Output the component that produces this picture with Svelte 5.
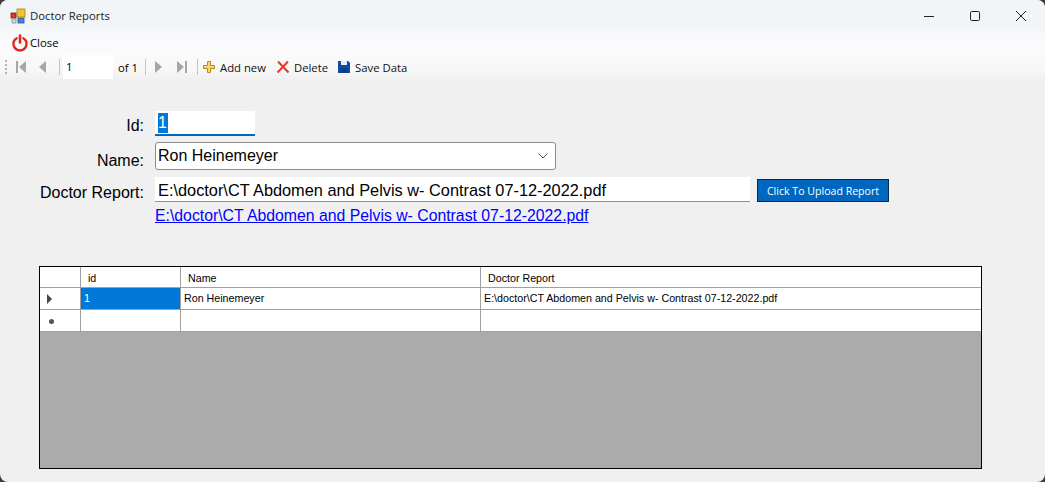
<script lang="ts">
  const columns = ['id', 'Name', 'Doctor Report'];
  const path = 'E:\\doctor\\CT Abdomen and Pelvis w- Contrast 07-12-2022.pdf';
</script>

<div class="window">
  <header class="titlebar">
    <svg class="app-icon" width="16" height="16" viewBox="0 0 16 16" aria-hidden="true">
      <rect x="7" y="1" width="8" height="8" fill="#f4c430" stroke="#a8801c" stroke-width="0.8"/>
      <rect x="1" y="5" width="5" height="5" fill="#d83a2e" stroke="#7f2018" stroke-width="0.8"/>
      <rect x="8" y="10" width="6" height="5" fill="#4a80d8" stroke="#2a4f90" stroke-width="0.8"/>
      <rect x="2" y="11" width="4" height="4" fill="#d5d8de" stroke="#8d9097" stroke-width="0.8"/>
    </svg>
    <span class="title">Doctor Reports</span>
    <div class="win-buttons">
      <svg width="10" height="10" viewBox="0 0 10 10" aria-hidden="true"><path d="M0 5.5h10" stroke="#222" fill="none"/></svg>
      <svg width="10" height="10" viewBox="0 0 10 10" aria-hidden="true"><rect x="0.5" y="0.5" width="9" height="9" rx="1.2" stroke="#222" fill="none"/></svg>
      <svg width="10" height="10" viewBox="0 0 10 10" aria-hidden="true"><path d="M0 0l10 10M10 0L0 10" stroke="#222" fill="none"/></svg>
    </div>
  </header>

  <div class="menubar">
    <svg width="18" height="18" viewBox="0 0 18 18" aria-hidden="true">
      <path d="M5.6 4.2a6.6 6.6 0 1 0 6.8 0" fill="none" stroke="#e0281f" stroke-width="2.4" stroke-linecap="round"/>
      <path d="M9 1.5v7" stroke="#e0281f" stroke-width="2.6" stroke-linecap="round"/>
    </svg>
    <span>Close</span>
  </div>

  <div class="toolbar">
    <span class="grip"></span>
    <svg class="nav" width="12" height="14" viewBox="0 0 12 14" aria-hidden="true"><path d="M1 1h2v12H1zM11 1v12L4 7z"/></svg>
    <svg class="nav" width="12" height="14" viewBox="0 0 12 14" aria-hidden="true"><path d="M9 1v12L2 7z"/></svg>
    <span class="sep"></span>
    <span class="position">1</span>
    <span class="of">of 1</span>
    <span class="sep"></span>
    <svg class="nav nav-next" width="12" height="14" viewBox="0 0 12 14" aria-hidden="true"><path d="M3 1v12l7-6z"/></svg>
    <svg class="nav nav-last" width="12" height="14" viewBox="0 0 12 14" aria-hidden="true"><path d="M1 1v12l7-6zM9 1h2v12H9z"/></svg>
    <span class="sep"></span>
    <button class="tool">
      <svg width="14" height="14" viewBox="0 0 14 14" aria-hidden="true"><path d="M5.5 1.5h3v4h4v3h-4v4h-3v-4h-4v-3h4z" fill="#f7d774" stroke="#b98a1e"/></svg>
      Add new
    </button>
    <button class="tool">
      <svg width="14" height="14" viewBox="0 0 14 14" aria-hidden="true"><path d="M2 1.5l10.5 11M12 1.5L1.5 12.5" stroke="#e33a2a" stroke-width="2" fill="none"/></svg>
      Delete
    </button>
    <button class="tool">
      <svg width="14" height="14" viewBox="0 0 14 14" aria-hidden="true"><path d="M1 1h10l2 2v10H1z" fill="#0b4ea2"/><path d="M4 1h6v4H4z" fill="#e8eef8"/><path d="M3.5 8h7v5h-7z" fill="#0b3f86"/></svg>
      Save Data
    </button>
  </div>

  <form class="form">
    <label class="field-label label-id" for="rec-id">Id:</label>
    <div class="id-box" id="rec-id"><span class="selected">1</span></div>

    <label class="field-label label-name" for="rec-name">Name:</label>
    <div class="combo" id="rec-name">
      <span>Ron Heinemeyer</span>
      <svg width="10" height="6" viewBox="0 0 10 6" aria-hidden="true"><path d="M0.5 0.5L5 5l4.5-4.5" fill="none" stroke="#555"/></svg>
    </div>

    <label class="field-label label-report" for="rec-report">Doctor Report:</label>
    <div class="report-row">
      <div class="report-box" id="rec-report">{path}</div>
      <button type="button" class="upload">Click To Upload Report</button>
    </div>

    <a class="link" href="#top">{path}</a>
  </form>

  <div class="grid">
    <div class="row header">
      <div class="cell head"></div>
      {#each columns as col}
        <div class="cell">{col}</div>
      {/each}
    </div>
    <div class="row current">
      <div class="cell head"><i class="arrow"></i></div>
      <div class="cell picked">1</div>
      <div class="cell">Ron Heinemeyer</div>
      <div class="cell">{path}</div>
    </div>
    <div class="row fresh">
      <div class="cell head"><i class="star"></i></div>
      <div class="cell"></div>
      <div class="cell"></div>
      <div class="cell"></div>
    </div>
  </div>
</div>

<style>
  :global(body) {
    margin: 0;
    background: #3a3f3a;
    overflow: hidden;
  }

  .window {
    width: 1045px;
    height: 482px;
    box-sizing: border-box;
    background: #f0f0f0;
    border-radius: 8px;
    overflow: hidden;
    color: #000;
    font-family: "Liberation Sans", Arial, sans-serif;
  }

  .titlebar {
    height: 31px;
    background: #f1f5f8;
    display: flex;
    align-items: center;
    padding-left: 10px;
    font: 11.3px "Open Sans", "Noto Sans", sans-serif;
    color: #1a1a1a;
  }

  .title { margin-left: 4px; }

  .win-buttons {
    margin-left: auto;
    display: flex;
    gap: 36px;
    padding-right: 19px;
  }

  .menubar {
    height: 24px;
    background: linear-gradient(#f7f8fa, #fbfbfc);
    display: flex;
    align-items: center;
    gap: 1px;
    padding-left: 11px;
    font: 11.3px "Open Sans", "Noto Sans", sans-serif;
  }

  .menubar span { margin-bottom: 2px; }

  .toolbar {
    height: 24px;
    padding: 0 0 1px 5px;
    background: linear-gradient(#fafafb, #f7f7f8 60%, #f0f0f0);
    display: flex;
    align-items: center;
    font: 11.3px "Open Sans", "Noto Sans", sans-serif;
  }

  .grip {
    width: 2px;
    height: 14px;
    margin-right: 8px;
    background: repeating-linear-gradient(#b5b5b5 0 2px, transparent 2px 4px);
  }

  .nav { fill: #a6a6a6; margin-right: 10px; }
  .nav-next { margin: 0 12px 0 3px; }
  .nav-last { margin-right: 9px; }

  .sep {
    width: 1px;
    height: 16px;
    background: #c4c4c4;
    margin: 0 3px 0 0;
  }

  .position {
    width: 50px;
    height: 24px;
    line-height: 24px;
    background: #fff;
    padding-left: 3px;
    box-sizing: border-box;
    margin-right: 5px;
  }

  .of { margin-right: 7px; }

  .tool {
    display: flex;
    align-items: center;
    gap: 4px;
    border: none;
    background: none;
    padding: 0;
    margin: 0 9px 0 0;
    font: inherit;
    color: #111;
  }

  .tool:first-of-type { margin: 0 10px 0 1px; }

  .form {
    display: grid;
    grid-template-columns: 144px 1fr;
    column-gap: 11px;
    align-items: center;
    padding-top: 31px;
    font-size: 16px;
  }

  .field-label { text-align: right; }
  .label-id { padding-top: 4px; }
  .label-name { padding-top: 15px; }
  .label-report { padding-top: 14px; }

  .id-box {
    width: 100px;
    height: 25px;
    box-sizing: border-box;
    background: #fff;
    border-bottom: 2px solid #0067c0;
    padding: 2px 0 0 3px;
    line-height: 20px;
  }

  .selected {
    display: inline-block;
    background: #0078d7;
    color: #fff;
    padding-right: 1px;
  }

  .combo {
    width: 401px;
    height: 28px;
    margin-top: 6px;
    box-sizing: border-box;
    background: #fff;
    border: 1px solid #8c8c8c;
    border-radius: 3px;
    display: flex;
    align-items: center;
    justify-content: space-between;
    padding: 0 7px 0 2px;
  }

  .report-row {
    display: flex;
    align-items: flex-end;
    gap: 7px;
    margin-top: 7px;
  }

  .report-box {
    width: 595px;
    height: 25px;
    box-sizing: border-box;
    background: #fff;
    border-bottom: 1px solid #8f8f8f;
    padding-left: 3px;
    font-size: 16.33px;
    line-height: 27px;
  }

  .upload {
    width: 132px;
    height: 23px;
    padding: 0;
    box-sizing: border-box;
    background: #0067c0;
    border: 1px solid #0a2a4a;
    color: #fff;
    font: 10.6px "Open Sans", "Noto Sans", sans-serif;
  }

  .link {
    grid-column: 2;
    margin-top: 4px;
    color: #0000ff;
    font-size: 15.8px;
    line-height: 19px;
  }

  .grid {
    width: 943px;
    height: 203px;
    box-sizing: border-box;
    margin: 41px 0 0 39px;
    background: #ababab;
    border: 1px solid #000;
    font-size: 10.7px;
  }

  .row {
    display: grid;
    grid-template-columns: 41px 100px 300px 1fr;
    background: #fff;
    height: 22px;
    box-sizing: border-box;
    border-bottom: 1px solid #a0a0a0;
  }

  .header { height: 21px; }

  .cell {
    box-sizing: border-box;
    padding-left: 3px;
    border-right: 1px solid #a0a0a0;
    line-height: 21px;
    white-space: nowrap;
    overflow: hidden;
  }

  .cell:last-child { border-right: none; }
  .header .cell { padding-left: 7px; line-height: 23px; }

  .head {
    position: relative;
  }

  .picked { background: #0078d7; color: #fff; }

  .arrow {
    position: absolute;
    left: 7px;
    top: 6px;
    border-left: 5px solid #444;
    border-top: 5px solid transparent;
    border-bottom: 5px solid transparent;
  }

  .star {
    position: absolute;
    left: 9px;
    top: 9px;
    width: 5px;
    height: 5px;
    border-radius: 50%;
    background: #555;
  }
</style>
